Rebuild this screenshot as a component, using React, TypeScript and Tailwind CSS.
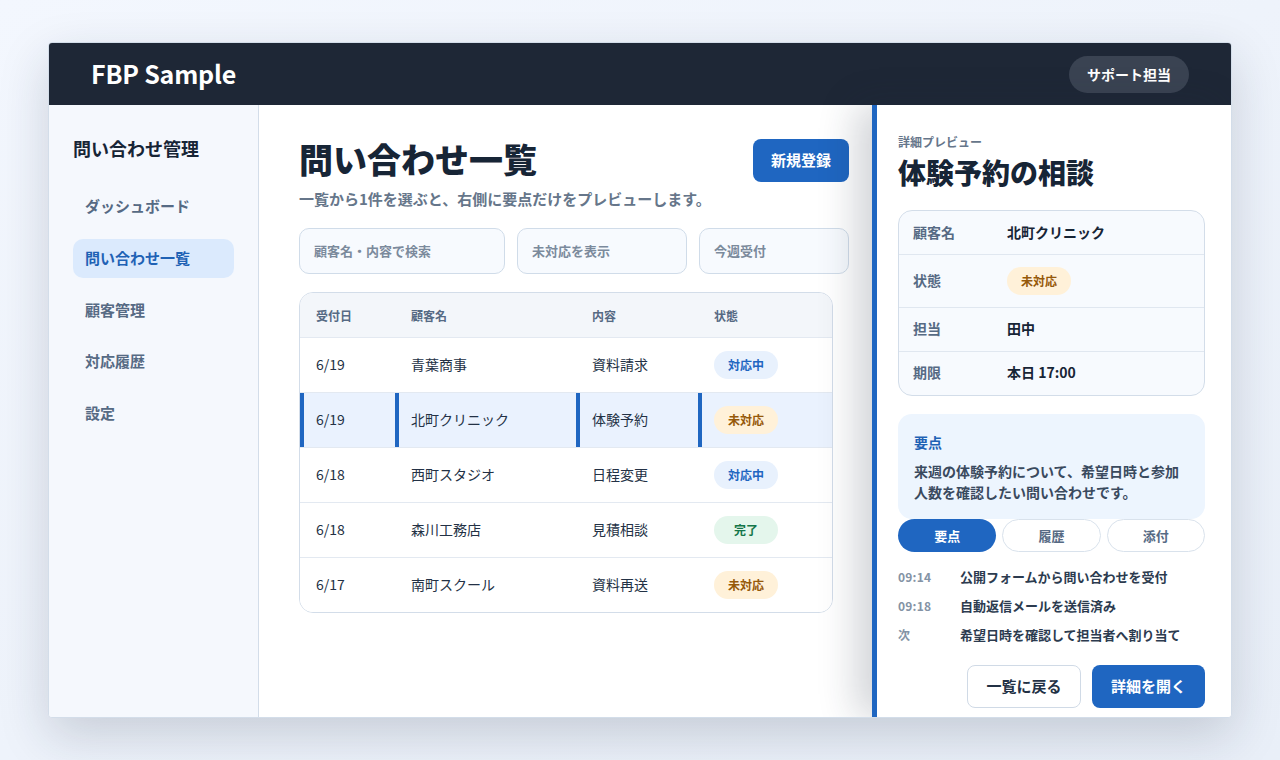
const font = { fontFamily: '"Noto Sans CJK JP", "Noto Sans", sans-serif' };

const navItems = ["ダッシュボード", "問い合わせ一覧", "顧客管理", "対応履歴", "設定"];

const rows = [
  { date: "6/19", name: "青葉商事", topic: "資料請求", status: "対応中" },
  { date: "6/19", name: "北町クリニック", topic: "体験予約", status: "未対応", selected: true },
  { date: "6/18", name: "西町スタジオ", topic: "日程変更", status: "対応中" },
  { date: "6/18", name: "森川工務店", topic: "見積相談", status: "完了" },
  { date: "6/17", name: "南町スクール", topic: "資料再送", status: "未対応" },
];

const logs = [
  { time: "09:14", text: "公開フォームから問い合わせを受付" },
  { time: "09:18", text: "自動返信メールを送信済み" },
  { time: "次", text: "希望日時を確認して担当者へ割り当て" },
];

function Badge({ status }: { status: string }) {
  const color =
    status === "対応中"
      ? "bg-[#e8f1fd] text-[#1f66c1]"
      : status === "完了"
      ? "bg-[#e4f6ec] text-[#14764a]"
      : "bg-[#fff1d9] text-[#96590a]";
  return (
    <span className={`inline-flex h-[28px] w-[64px] items-center justify-center rounded-full text-[12px] font-bold ${color}`}>
      {status}
    </span>
  );
}

export default function App() {
  return (
    <div
      className="h-[760px] w-[1280px] overflow-hidden bg-gradient-to-br from-[#f3f7fe] to-[#e9eff8] pl-[48px] pt-[42px]"
      style={font}
    >
      <div className="flex h-[676px] w-[1184px] flex-col overflow-hidden rounded-[4px] border border-[#d3dde9] bg-white shadow-[0_18px_50px_rgba(30,41,59,0.18)]">
        {/* Header */}
        <header className="flex h-[62px] shrink-0 items-center justify-between bg-[#1e2736] px-[42px]">
          <div className="text-[25px] font-bold tracking-[-0.2px] text-white">FBP Sample</div>
          <div className="flex h-[37px] w-[120px] items-center justify-center rounded-full bg-[#3a4352] text-[14px] font-bold text-white">
            サポート担当
          </div>
        </header>

        <div className="flex min-h-0 flex-1">
          {/* Sidebar */}
          <aside className="w-[210px] shrink-0 border-r border-[#d3dde9] bg-[#f5f8fd] px-[24px] pt-[30px]">
            <div className="mb-[26px] text-[18px] leading-[26px] font-bold text-[#172536]">問い合わせ管理</div>
            <nav className="flex flex-col gap-[12.7px]">
              {navItems.map((item) => (
                <div
                  key={item}
                  className={`flex h-[39px] w-[161px] items-center rounded-[10px] px-[12px] text-[15px] font-bold ${
                    item === "問い合わせ一覧" ? "bg-[#dbeafd] text-[#1f62b5]" : "text-[#566a84]"
                  }`}
                >
                  {item}
                </div>
              ))}
            </nav>
          </aside>

          {/* Main */}
          <main className="min-w-0 flex-1 pl-[40px] pr-[23px] pt-[34px]">
            <div className="flex items-start justify-between">
              <div>
                <h1 className="-mt-[1px] text-[34px] leading-[42px] font-black text-[#172536]">問い合わせ一覧</h1>
                <p className="mt-[9px] text-[15px] leading-[20px] font-semibold text-[#66768a]">
                  一覧から1件を選ぶと、右側に要点だけをプレビューします。
                </p>
              </div>
              <button className="flex h-[43px] w-[96px] items-center justify-center rounded-[8px] bg-[#1f66c1] text-[15px] font-bold text-white">
                新規登録
              </button>
            </div>

            <div className="mt-[19px] flex gap-[12px]">
              {[
                { label: "顧客名・内容で検索", width: "w-[206px]" },
                { label: "未対応を表示", width: "w-[170px]" },
                { label: "今週受付", width: "w-[150px]" },
              ].map((f) => (
                <div
                  key={f.label}
                  className={`flex h-[46px] items-center rounded-[10px] border border-[#d0dce9] bg-[#f7fafe] px-[14px] text-[13px] font-semibold text-[#7b8a9c] ${f.width}`}
                >
                  {f.label}
                </div>
              ))}
            </div>

            {/* Table */}
            <div className="mt-[18px] w-[534px] overflow-hidden rounded-[14px] border border-[#d3dde9]">
              <div className="grid h-[45px] grid-cols-[95px_181px_122px_1fr] items-center border-b border-[#e3e9f1] bg-[#f3f6fa] pt-[2px] text-[12px] font-bold text-[#566a84]">
                <div className="pl-[16px]">受付日</div>
                <div className="pl-[16px]">顧客名</div>
                <div className="pl-[16px]">内容</div>
                <div className="pl-[16px]">状態</div>
              </div>
              {rows.map((row, idx) => {
                const cell = `flex h-full items-center pl-[16px] ${
                  row.selected ? "shadow-[inset_4px_0_0_#1f66c1]" : ""
                }`;
                const last = idx === rows.length - 1;
                return (
                  <div
                    key={row.name}
                    className={`grid grid-cols-[95px_181px_122px_1fr] text-[14px] text-[#233145] ${
                      last ? "h-[54px]" : "h-[55px] border-b border-[#e3e9f1]"
                    } ${row.selected ? "bg-[#eaf2fe]" : "bg-white"}`}
                  >
                    <div className={`${cell} pb-[2px]`}>{row.date}</div>
                    <div className={`${cell} pb-[2px]`}>{row.name}</div>
                    <div className={`${cell} pb-[2px]`}>{row.topic}</div>
                    <div className={cell}>
                      <Badge status={row.status} />
                    </div>
                  </div>
                );
              })}
            </div>
          </main>

          {/* Preview panel */}
          <section className="relative w-[359px] shrink-0 border-l-[5px] border-[#1f66c1] bg-white pl-[21px] pr-[26px] pt-[28px] shadow-[-16px_0_36px_rgba(30,40,60,0.2)]">
            <div className="text-[12px] leading-[17px] font-bold text-[#66768a]">詳細プレビュー</div>
            <h2 className="mt-[3px] text-[28px] leading-[38px] font-black text-[#172536]">体験予約の相談</h2>

            <div className="mt-[19px] overflow-hidden rounded-[14px] border border-[#d3dde9] bg-[#f7fafe] text-[14px]">
              {[
                { label: "顧客名", value: "北町クリニック", h: "h-[44px]" },
                { label: "状態", value: "", h: "h-[53px]" },
                { label: "担当", value: "田中", h: "h-[44px]" },
                { label: "期限", value: "本日 17:00", h: "h-[43px]" },
              ].map((r, idx) => (
                <div
                  key={r.label}
                  className={`flex items-center px-[14px] ${r.h} ${idx < 3 ? "border-b border-[#e0e7f0]" : ""}`}
                >
                  <div className={`w-[94px] font-bold text-[#566a84] ${idx > 0 ? "pb-[2px]" : ""}`}>{r.label}</div>
                  {r.value ? (
                    <div className={`font-bold text-[#172536] ${idx > 0 ? "pb-[2px]" : ""}`}>{r.value}</div>
                  ) : (
                    <Badge status="未対応" />
                  )}
                </div>
              ))}
            </div>

            <div className="mt-[18px] h-[105px] rounded-[14px] bg-[#edf5fe] px-[16px] pt-[18px]">
              <div className="text-[14px] leading-[20px] font-bold text-[#1f62b5]">要点</div>
              <p className="mt-[9px] text-[14px] leading-[21px] font-semibold text-[#3a4a5e]">
                来週の体験予約について、希望日時と参加人数を確認したい問い合わせです。
              </p>
            </div>

            <div className="grid grid-cols-3 gap-[6px]">
              {["要点", "履歴", "添付"].map((t, idx) => (
                <div
                  key={t}
                  className={`flex h-[33px] items-center justify-center rounded-full text-[13px] font-bold ${
                    idx === 0 ? "bg-[#1f66c1] text-white" : "border border-[#d9e2ec] bg-white text-[#566a84]"
                  }`}
                >
                  {t}
                </div>
              ))}
            </div>

            <div className="mt-[15px] flex flex-col gap-[9px]">
              {logs.map((l) => (
                <div key={l.time} className="flex h-[20px] items-center text-[13px] font-bold">
                  <div className="w-[62px] text-[12px] tracking-[0.2px] text-[#8493a5]">{l.time}</div>
                  <div className="text-[#2c3b4f]">{l.text}</div>
                </div>
              ))}
            </div>

            <div className="mt-[20px] flex justify-end gap-[11px]">
              <button className="flex h-[43px] w-[114px] items-center justify-center rounded-[8px] border border-[#d0dae6] bg-white text-[15px] font-bold text-[#233145]">
                一覧に戻る
              </button>
              <button className="flex h-[43px] w-[113px] items-center justify-center rounded-[8px] bg-[#1f66c1] text-[15px] font-bold text-white">
                詳細を開く
              </button>
            </div>
          </section>
        </div>
      </div>
    </div>
  );
}
